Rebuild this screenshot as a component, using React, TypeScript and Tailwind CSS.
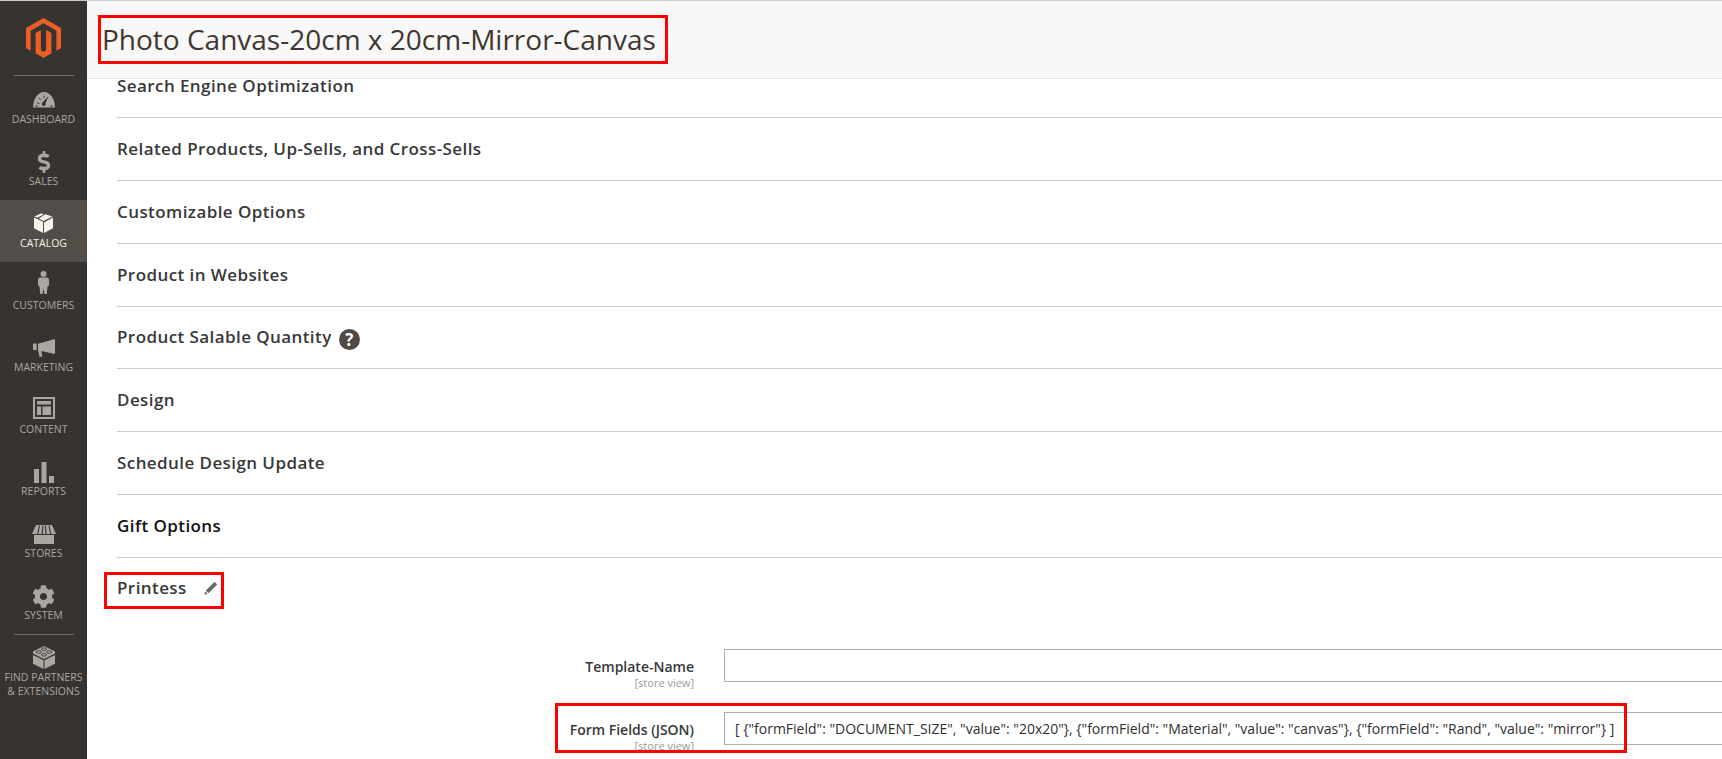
import React from "react";
import { FaDollarSign, FaCog } from "react-icons/fa";

const font = { fontFamily: '"Open Sans", sans-serif' };

const Gauge = () => (
  <svg width="22" height="16" viewBox="0 0 22 16" fill="currentColor">
    <path d="M0 15.5C0 7 4.8 0 11 0S22 7 22 15.5Z" />
    <path d="M15.6 4 L12.6 11 A2 2 0 1 1 10 10Z" fill="#373330" />
    <g stroke="#373330" strokeWidth="1" strokeLinecap="round">
      <path d="M4.5 11l1.6.6M6.4 6.3l1.2 1.2M11 4v1.8M2.8 14h1.6M17.6 14h1.6" />
    </g>
  </svg>
);
const Box = () => (
  <svg className="mb-[2px]" width="19" height="20" viewBox="0 0 19 20" fill="currentColor">
    <path d="M9.5 9 L0 4.6V15.2L9 20V9.5Z" />
    <path d="M10 9.5V20L19 15.2V4.6Z" />
    <path d="M7.2 0.2 L0.6 3.4 3.2 4.7 9.8 1.4Z" />
    <path d="M11.4 1.2 L4.9 5.5 9.5 7.9 18.4 3.4Z" />
  </svg>
);
const Person = () => (
  <svg className="mb-[8px]" width="11" height="23" viewBox="0 0 11 23" fill="currentColor">
    <circle cx="5.5" cy="3" r="3" />
    <path d="M1.5 6.5h8L11 8v6.5l-1.5 1-.7 7.5H6.4l-.9-6-.9 6H2.2l-.7-7.5L0 14.5V8Z" />
  </svg>
);
const Megaphone = () => (
  <svg width="22" height="18" viewBox="0 0 22 18" fill="currentColor">
    <path d="M22 0V15L5 11.2V4.8Z" />
    <path d="M0 5.5C0 4.8.5 4.5 1 4.5H3.6V11H1C.5 11 0 10.6 0 10Z" />
    <path d="M5 11H8.2L9.3 17.2 6.6 18Z" />
  </svg>
);
const Content = () => (
  <svg className="mb-[4px]" width="22" height="22" viewBox="0 0 22 22" fill="currentColor">
    <path fillRule="evenodd" d="M0 0H22V22H0ZM2 2V20H20V2Z" />
    <path d="M4 4H18V7.5H4Z" />
    <path d="M4 9.5H8V18H4Z" />
    <path d="M9.5 9.5H18V18H9.5Z" />
  </svg>
);
const Bars = () => (
  <svg width="20" height="21" viewBox="0 0 20 21" fill="currentColor">
    <path d="M0 7H5V21H0Z" />
    <path d="M7.5 0H12.5V21H7.5Z" />
    <path d="M15 14H20V21H15Z" />
  </svg>
);
const Store = () => (
  <svg width="24" height="19" viewBox="0 0 24 19" fill="currentColor">
    <path d="M4 0H20L24 9H0Z" />
    <path d="M2 10H22V19H2Z" />
    <g stroke="#373330" strokeWidth="1.1">
      <path d="M7.5 0.5L5.8 9M11 0.5L10.2 9M13.5 0.5L14 9M17 0.5L18.6 9" />
    </g>
  </svg>
);
const Lego = () => (
  <svg width="22" height="23" viewBox="0 0 22 23" fill="currentColor">
    <path d="M11 0L22 5.5V7.5L11 13 0 7.5V5.5Z" />
    <path d="M0 9L10.5 14.2V23L0 17.8Z" />
    <path d="M22 9L11.5 14.2V23L22 17.8Z" />
    <g fill="none" stroke="#373330" strokeWidth="0.8">
      <ellipse cx="11" cy="3.2" rx="2.6" ry="1.3" />
      <ellipse cx="5.8" cy="6" rx="2.6" ry="1.3" />
      <ellipse cx="16.2" cy="6" rx="2.6" ry="1.3" />
      <ellipse cx="11" cy="8.8" rx="2.6" ry="1.3" />
    </g>
  </svg>
);

const items: { label: string; icon: React.ReactNode; active?: boolean }[] = [
  { label: "DASHBOARD", icon: <Gauge /> },
  { label: "SALES", icon: <FaDollarSign size={22} /> },
  { label: "CATALOG", icon: <Box />, active: true },
  { label: "CUSTOMERS", icon: <Person /> },
  { label: "MARKETING", icon: <Megaphone /> },
  { label: "CONTENT", icon: <Content /> },
  { label: "REPORTS", icon: <Bars /> },
  { label: "STORES", icon: <Store /> },
  { label: "SYSTEM", icon: <FaCog size={23} /> },
];

const rows = [
  "Related Products, Up-Sells, and Cross-Sells",
  "Customizable Options",
  "Product in Websites",
  "Product Salable Quantity",
  "Design",
  "Schedule Design Update",
  "Gift Options",
];

function Row({ title }: { title: string }) {
  return (
    <div className="flex h-[62.86px] items-end border-b border-[#cccccc] pb-[21px]">
      <span
        className={
          "text-[17px] leading-[20px] font-semibold tracking-[0.42px] " +
          (title === "Gift Options" ? "text-[#111111]" : "text-[#383838]")
        }
      >
        {title}
      </span>
      {title === "Product Salable Quantity" && (
        <span className="mb-[-3px] ml-[7px] flex h-[21px] w-[21px] items-center justify-center rounded-full bg-[#514943] text-[17px] leading-none font-bold text-white">
          ?
        </span>
      )}
    </div>
  );
}

function Field({ label, value }: { label: string; value?: string }) {
  return (
    <div className="flex h-[42px]">
      <div className="w-[607px] shrink-0 pt-[8px] text-right">
        <div className="text-[14px] leading-[19px] font-semibold text-[#383838]">{label}</div>
        <div className="text-[11px] leading-[14px] text-[#999999]">[store view]</div>
      </div>
      <div className="ml-[30px] flex h-[33px] w-[1100px] shrink-0 items-center border border-[#adadad] pl-[10px] text-[14px] text-[#303030]">
        {value}
      </div>
    </div>
  );
}

export default function App() {
  return (
    <div className="relative flex h-[759px] flex-col overflow-hidden bg-white" style={font}>
      <div className="h-px shrink-0 bg-[#c9cbd3]" />
      <div className="flex min-h-0 flex-1">
        <aside className="flex w-[87px] shrink-0 flex-col items-center bg-[#373330]">
          <div className="flex h-[74px] w-full shrink-0 flex-col items-center pt-[17px]">
            <svg width="35" height="40" viewBox="0 0 35 40" fill="#eb5f24">
              <path d="M17.5 0L35 10V30L30.4 32.7V12.7L17.5 5.2 4.6 12.7V32.7L0 30V10Z" />
              <path d="M9.6 15L14.9 12V32.3L17.5 33.8 20.1 32.3V12L25.4 15V35.2L17.5 40 9.6 35.2Z" />
            </svg>
          </div>
          <div className="h-px w-[60px] shrink-0 bg-[#736d67]" />
          {items.map((it) => (
            <div
              key={it.label}
              className={
                "flex h-[62px] w-full shrink-0 flex-col items-center pt-[12px] " +
                (it.active ? "bg-[#524d49] text-[#f7f3eb]" : "text-[#aaa6a0]")
              }
            >
              <div className="flex h-[24px] items-center justify-center">{it.icon}</div>
              <div className="text-[10.5px] leading-[14px]">{it.label}</div>
            </div>
          ))}
          <div className="h-px w-[60px] shrink-0 bg-[#736d67]" />
          <div className="flex w-full flex-col items-center pt-[10px] text-[#aaa6a0]">
            <div className="flex h-[24px] items-center justify-center">
              <Lego />
            </div>
            <div className="mt-[1px] text-center text-[10.5px] leading-[14px] whitespace-nowrap">
              FIND PARTNERS
              <br />& EXTENSIONS
            </div>
          </div>
        </aside>
        <main className="flex min-w-0 flex-1 flex-col">
          <header className="flex h-[78px] shrink-0 items-center border-b border-[#e3e3e3] bg-[#f8f8f8] pb-[2px] pl-[15px]">
            <h1 className="text-[28px] leading-[36px] font-normal whitespace-nowrap text-[#41362f]">
              Photo Canvas-20cm x 20cm-Mirror-Canvas
            </h1>
          </header>
          <div className="pl-[30px]">
            <div className="flex h-[39px] items-end border-b border-[#cccccc] pb-[21px]">
              <span className="text-[17px] leading-[20px] font-semibold tracking-[0.42px] text-[#383838]">
                Search Engine Optimization
              </span>
            </div>
            {rows.map((r) => (
              <Row key={r} title={r} />
            ))}
            <div className="flex h-[62px] items-center pb-[2px]">
              <span className="text-[17px] leading-[20px] font-semibold tracking-[0.42px] text-[#383838]">
                Printess
              </span>
              <svg className="ml-[17px]" width="14" height="14" viewBox="0 0 14 14" fill="#666666">
                <path d="M10.6 0.8L13.2 3.4 4.4 12.2 1.8 9.6Z" />
                <path d="M1.2 10.4L3.6 12.8 0.2 13.8Z" />
              </svg>
            </div>
          </div>
          <div className="mt-[29px] flex flex-col gap-[21px]">
            <Field label="Template-Name" />
            <Field
              label="Form Fields (JSON)"
              value={'[ {"formField": "DOCUMENT_SIZE", "value": "20x20"}, {"formField": "Material", "value": "canvas"}, {"formField": "Rand", "value": "mirror"} ]'}
            />
          </div>
        </main>
      </div>
      {/* red annotation boxes lying over the page */}
      <div className="pointer-events-none absolute top-[15px] left-[98px] h-[49px] w-[570px] border-[3px] border-[#ff0000]" />
      <div className="pointer-events-none absolute top-[572px] left-[104px] h-[37px] w-[120px] border-[3px] border-[#ff0000]" />
      <div className="pointer-events-none absolute top-[703px] left-[555px] h-[50px] w-[1072px] border-[3px] border-[#ff0000]" />
    </div>
  );
}
